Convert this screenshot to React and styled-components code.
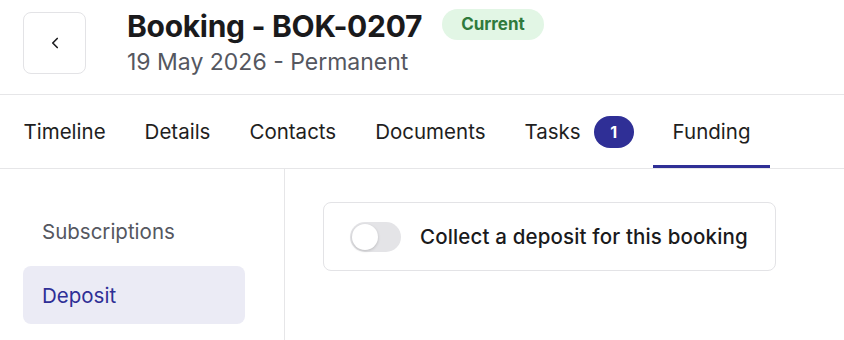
import React, { useState } from 'react'
import styled, { createGlobalStyle } from 'styled-components'

const GlobalStyle = createGlobalStyle`
  * { box-sizing: border-box; }
  body {
    margin: 0;
    background: #ffffff;
    font-family: Inter, "Open Sans", sans-serif;
    color: #1c1c1f;
  }
`

const Page = styled.div`
  width: 844px;
  height: 340px;
  overflow: hidden;
  display: flex;
  flex-direction: column;
`

const Header = styled.header`
  display: flex;
  align-items: flex-start;
  gap: 41px;
  padding: 12px 23px 0;
  height: 95px;
  border-bottom: 1px solid #e6e6e8;
`

const BackButton = styled.button`
  width: 63px;
  height: 62px;
  border: 1px solid #e3e3e6;
  border-radius: 8px;
  background: #fff;
  display: flex;
  align-items: center;
  justify-content: center;
  color: #1c1c1f;
  cursor: pointer;
  padding: 0;
`

const TitleBlock = styled.div`
  display: flex;
  flex-direction: column;
  gap: 7px;
`

const TitleRow = styled.div`
  display: flex;
  align-items: center;
  gap: 20px;
`

const Title = styled.h1`
  margin: 0;
  font-size: 30px;
  font-weight: 700;
  letter-spacing: -0.3px;
  line-height: 28px;
  color: #1a1a1c;
`

const Badge = styled.span`
  background: #e2f6e5;
  color: #2f7a3c;
  font-size: 17px;
  font-weight: 700;
  padding: 5px 19px;
  border-radius: 16px;
  line-height: 21px;
  margin-top: -3px;
`

const Subtitle = styled.div`
  font-size: 23px;
  color: #55575f;
  line-height: 30px;
`

const Tabs = styled.nav`
  display: flex;
  align-items: stretch;
  height: 74px;
  padding-left: 4px;
  border-bottom: 1px solid #e6e6e8;
`

const Tab = styled.div`
  display: flex;
  align-items: center;
  gap: 13px;
  padding: 0 19.5px;
  font-size: 20.5px;
  color: #1e1e21;
  border-bottom: 3px solid ${p => (p.$active ? '#2f2f96' : 'transparent')};
  padding-top: 3px;
  cursor: pointer;
`

const CountPill = styled.span`
  background: #2f2f96;
  color: #fff;
  font-size: 16px;
  font-weight: 700;
  height: 32px;
  min-width: 40px;
  border-radius: 16px;
  display: flex;
  align-items: center;
  justify-content: center;
`

const Body = styled.div`
  flex: 1;
  display: flex;
`

const Sidebar = styled.aside`
  width: 285px;
  border-right: 1px solid #e6e6e8;
  padding: 33px 39px 0 23px;
  display: flex;
  flex-direction: column;
  gap: 6px;
`

const SideItem = styled.div`
  height: 58px;
  display: flex;
  align-items: center;
  padding-left: 19px;
  border-radius: 8px;
  font-size: 20.5px;
  color: ${p => (p.$active ? '#2f2f96' : '#55575f')};
  background: ${p => (p.$active ? '#ebebf5' : 'transparent')};
  cursor: pointer;
`

const Content = styled.main`
  flex: 1;
  padding: 33px 0 0 38px;
`

const Card = styled.div`
  width: 453px;
  height: 69px;
  border: 1px solid #e3e3e6;
  border-radius: 8px;
  display: flex;
  align-items: center;
  gap: 19px;
  padding: 0 0 0 26px;
`

const Switch = styled.button`
  width: 51px;
  height: 30px;
  border-radius: 15px;
  border: none;
  padding: 0;
  background: ${p => (p.$on ? '#2f2f96' : '#e4e4e7')};
  display: flex;
  align-items: center;
  cursor: pointer;
  flex-shrink: 0;
`

const Knob = styled.span`
  width: 26px;
  height: 26px;
  border-radius: 50%;
  background: #fff;
  box-shadow: 0 1px 3px rgba(0, 0, 0, 0.18);
  margin-left: ${p => (p.$on ? '23px' : '2px')};
  transition: margin 0.15s;
`

const CardLabel = styled.span`
  font-size: 20.5px;
  font-weight: 500;
  letter-spacing: 0.15px;
  white-space: nowrap;
  color: #1a1a1c;
`

const tabs = ['Timeline', 'Details', 'Contacts', 'Documents', 'Tasks', 'Funding']

export default function App() {
  const [on, setOn] = useState(false)

  return (
    <>
      <GlobalStyle />
      <Page>
        <Header>
          <BackButton aria-label="Back">
            <svg width="18" height="18" viewBox="0 0 24 24" fill="none" stroke="currentColor" strokeWidth="2.2" strokeLinecap="round" strokeLinejoin="round">
              <path d="M15 18l-6-6 6-6" />
            </svg>
          </BackButton>
          <TitleBlock>
            <TitleRow>
              <Title>Booking - BOK-0207</Title>
              <Badge>Current</Badge>
            </TitleRow>
            <Subtitle>19 May 2026 - Permanent</Subtitle>
          </TitleBlock>
        </Header>

        <Tabs>
          {tabs.map(t => (
            <Tab key={t} $active={t === 'Funding'}>
              {t}
              {t === 'Tasks' && <CountPill>1</CountPill>}
            </Tab>
          ))}
        </Tabs>

        <Body>
          <Sidebar>
            <SideItem>Subscriptions</SideItem>
            <SideItem $active>Deposit</SideItem>
          </Sidebar>
          <Content>
            <Card>
              <Switch $on={on} onClick={() => setOn(!on)}>
                <Knob $on={on} />
              </Switch>
              <CardLabel>Collect a deposit for this booking</CardLabel>
            </Card>
          </Content>
        </Body>
      </Page>
    </>
  )
}
